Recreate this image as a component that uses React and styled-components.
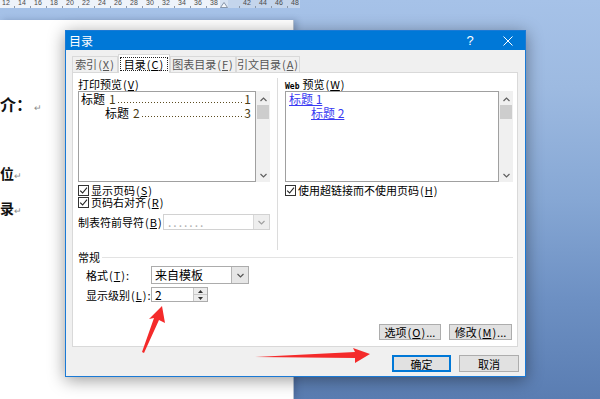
import React from 'react';
import styled, { createGlobalStyle } from 'styled-components';

const cjk = `"Noto Sans CJK SC", "Microsoft YaHei", sans-serif`;

const GlobalStyle = createGlobalStyle`
  html, body { margin: 0; padding: 0; }
  body { font-family: ${cjk}; }
  #root { width: 600px; height: 399px; }
`;

const Screen = styled.div`
  position: relative;
  width: 600px;
  height: 399px;
  overflow: hidden;
  display: flex;
  flex-direction: column;
  background: linear-gradient(180deg, #a6c2e8 0%, #9dbae1 22%, #86a7d4 50%, #6d90c3 75%, #5a7db2 100%);
  font-family: ${cjk};
`;

const Ruler = styled.div`
  display: flex;
  width: 300px;
  height: 8px;
  flex-shrink: 0;
`;

const RulerScale = styled.div`
  display: flex;
  width: ${p => p.$w}px;
  flex-shrink: 0;
  padding-left: ${p => p.$pad}px;
  box-sizing: border-box;
  background: ${p => p.$bg};
  overflow: hidden;
  & > span:first-child { margin-left: ${p => p.$first}px; }
`;

const RulerNum = styled.span`
  position: relative;
  flex: 0 0 16px;
  text-align: center;
  font: 7px/6px "Liberation Sans", sans-serif;
  color: #4a4a4a;
  &::after {
    content: "";
    position: absolute;
    left: 0;
    bottom: 0;
    width: 1px;
    height: 2px;
    background: #8a97a8;
  }
`;

const Marker = styled.svg`
  flex-shrink: 0;
  display: block;
`;

const Workspace = styled.div`
  flex: 1;
  display: flex;
  padding-top: 12px;
`;

const Page = styled.div`
  width: 293px;
  background: #fff;
  border-right: 1px solid #b5c2d3;
  box-shadow: 3px 0 6px rgba(30, 50, 90, 0.25);
  display: flex;
  flex-direction: column;
  padding-top: 74px;
  overflow: hidden;
`;

const DocLine = styled.div`
  margin-top: ${p => p.$top || 0}px;
  font-size: ${p => p.$size}px;
  font-weight: 700;
  line-height: 20px;
  height: 20px;
  color: #111;
  white-space: nowrap;
`;

const ReturnMark = styled.span`
  margin-left: ${p => p.$gap || 0}px;
  font-size: 9px;
  font-weight: 400;
  color: #8a8a8a;
`;

const Dialog = styled.div`
  position: absolute;
  left: 65px;
  top: 30px;
  width: 461px;
  height: 347px;
  box-sizing: border-box;
  border: 1px solid #1b7ad5;
  background: #f0f0f0;
  display: flex;
  flex-direction: column;
  box-shadow: 0 3px 16px rgba(0, 0, 0, 0.4);
  font-size: 11px;
  color: #000;
`;

const TitleBar = styled.div`
  height: 19px;
  flex-shrink: 0;
  display: flex;
  align-items: center;
  padding-left: 3px;
  background: #0078d7;
  color: #fff;
  font-size: 12px;
  line-height: 19px;
`;

const TitleButton = styled.div`
  width: ${p => p.$w}px;
  height: 19px;
  display: flex;
  align-items: center;
  justify-content: center;
  margin-left: ${p => (p.$push ? 'auto' : '0')};
  font: 13px "Liberation Sans", sans-serif;
  color: #fff;
`;

const Body = styled.div`
  flex: 1;
  display: flex;
  flex-direction: column;
  padding: 4px 6px 4px 6px;
`;

const TabRow = styled.div`
  display: flex;
  align-items: flex-end;
  height: 18px;
  flex-shrink: 0;
`;

const Tab = styled.div`
  position: relative;
  z-index: ${p => (p.$active ? 1 : 0)};
  box-sizing: border-box;
  width: ${p => p.$w}px;
  height: ${p => (p.$active ? 19 : 16)}px;
  margin-bottom: ${p => (p.$active ? -1 : 0)}px;
  border: 1px solid #d9d9d9;
  border-bottom: none;
  background: ${p => (p.$active ? '#fff' : '#f0f0f0')};
  color: ${p => (p.$active ? '#000' : '#555')};
  display: flex;
  align-items: center;
  justify-content: center;
  line-height: 13px;
  white-space: nowrap;
`;

const FocusText = styled.span`
  border: 1px dotted #222;
  padding: 0 3px;
  line-height: 12px;
`;

const Mn = styled.u`
  text-underline-offset: 1px;
`;

const Paren = styled.span`
  margin: 0 1px;
`;

const Panel = styled.div`
  box-sizing: border-box;
  width: 446px;
  height: 275px;
  flex-shrink: 0;
  border: 1px solid #d9d9d9;
  background: #fff;
  padding: 4px 4px 6px 5px;
  display: flex;
  flex-direction: column;
`;

const TopSection = styled.div`
  display: flex;
  height: 173px;
  flex-shrink: 0;
`;

const Column = styled.div`
  display: flex;
  flex-direction: column;
  width: ${p => (p.$w ? `${p.$w}px` : 'auto')};
  flex: ${p => (p.$w ? '0 0 auto' : '1')};
`;

const VSeparator = styled.div`
  width: 1px;
  margin: 1px 7px 0 7px;
  background: #dcdcdc;
`;

const Label = styled.div`
  height: 14px;
  line-height: 14px;
  white-space: nowrap;
`;

const WebTag = styled.span`
  font: bold 8px "DejaVu Sans Mono", monospace;
  margin-right: 3px;
`;

const ListRow = styled.div`
  display: flex;
  height: 91px;
`;

const ListBox = styled.div`
  flex: 1;
  box-sizing: border-box;
  border: 1px solid #a0a0a0;
  background: #fff;
  padding: 0 4px 0 1px;
  font-size: 12px;
`;

const Scrollbar = styled.div`
  width: 14px;
  background: #f0f0f0;
  display: flex;
  flex-direction: column;
  align-items: center;
  padding-top: 2px;
  box-sizing: border-box;
`;

const ScrollArrow = styled.div`
  height: ${p => p.$h}px;
  display: flex;
  align-items: center;
  justify-content: center;
`;

const Thumb = styled.div`
  width: 12px;
  height: 14px;
  background: #cdcdcd;
`;

const Grow = styled.div`
  flex: 1;
`;

const PreviewLine = styled.div`
  display: flex;
  align-items: center;
  height: 14px;
  line-height: 14px;
  padding-left: ${p => p.$indent}px;
  white-space: nowrap;
`;

const PageNum = styled.span`
  margin-left: ${p => p.$gap || 0}px;
  color: #4a3c14;
`;

const Leader = styled.span`
  flex: 1;
  align-self: flex-end;
  height: 1px;
  margin: 0 2px 3px 2px;
  background-image: linear-gradient(to right, #5c4c20 1px, transparent 1px);
  background-size: 3px 1px;
`;

const Link = styled.span`
  color: #3a3af2;
  text-decoration: underline;
  text-underline-offset: 1px;
`;

const CheckRow = styled.div`
  display: flex;
  align-items: center;
  gap: 2px;
  height: 12px;
  line-height: 12px;
  margin-top: ${p => p.$top || 0}px;
  white-space: nowrap;
`;

const CheckBox = styled.span`
  width: 11px;
  height: 11px;
  box-sizing: border-box;
  border: 1px solid #333;
  background: #fff;
  display: flex;
  align-items: center;
  justify-content: center;
  flex-shrink: 0;
`;

const FieldRow = styled.div`
  display: flex;
  align-items: center;
  height: ${p => p.$h}px;
  margin-top: ${p => p.$top || 0}px;
  padding-left: ${p => p.$indent || 0}px;
  white-space: nowrap;
`;

const FieldLabel = styled.span`
  width: ${p => p.$w}px;
  flex-shrink: 0;
`;

const Combo = styled.div`
  box-sizing: border-box;
  width: ${p => p.$w}px;
  height: 100%;
  border: 1px solid ${p => (p.$disabled ? '#d2d2d2' : '#acacac')};
  background: #fff;
  display: flex;
  align-items: center;
`;

const ComboText = styled.span`
  flex: 1;
  padding-left: ${p => p.$pad || 3}px;
  color: ${p => (p.$disabled ? '#b0b0b0' : '#000')};
  letter-spacing: ${p => (p.$disabled ? '2px' : '0')};
  font-size: 12px;
  line-height: 12px;
`;

const ComboArrow = styled.span`
  width: ${p => p.$w}px;
  align-self: stretch;
  box-sizing: border-box;
  border-left: 1px solid ${p => (p.$disabled ? '#d8d8d8' : '#b4b4b4')};
  background: ${p => (p.$disabled ? '#eeeeee' : '#e6e6e6')};
  display: flex;
  align-items: center;
  justify-content: center;
`;

const SpinButtons = styled.span`
  width: 13px;
  align-self: stretch;
  display: flex;
  flex-direction: column;
  border-left: 1px solid #c8c8c8;
  background: #ececec;
`;

const SpinHalf = styled.span`
  flex: 1;
  display: flex;
  align-items: center;
  justify-content: center;
  border-top: ${p => (p.$lower ? '1px solid #c8c8c8' : 'none')};
`;

const GroupHeader = styled.div`
  display: flex;
  align-items: center;
  height: 14px;
  line-height: 14px;
  & > span:first-child { width: 24px; }
`;

const GroupLine = styled.span`
  flex: 1;
  height: 1px;
  background: #e3e3e3;
`;

const ButtonRow = styled.div`
  display: flex;
  justify-content: flex-end;
  gap: 8px;
  margin-top: ${p => p.$top || 0}px;
  margin-right: ${p => p.$right || 0}px;
`;

const Button = styled.div`
  box-sizing: border-box;
  width: ${p => p.$w}px;
  height: ${p => p.$h}px;
  border: 1px solid ${p => (p.$primary ? '#0078d7' : '#adadad')};
  box-shadow: ${p => (p.$primary ? 'inset 0 0 0 1px #0078d7' : 'none')};
  background: #e1e1e1;
  display: flex;
  align-items: center;
  justify-content: center;
  line-height: 12px;
  white-space: nowrap;
`;

const Annotations = styled.svg`
  position: absolute;
  left: 0;
  top: 0;
  pointer-events: none;
`;

function Chevron({ up, color = '#606060' }) {
  return (
    <svg width="7" height="5" viewBox="0 0 7 5">
      <path d={up ? 'M0.5 4 L3.5 1 L6.5 4' : 'M0.5 1 L3.5 4 L6.5 1'} fill="none" stroke={color} strokeWidth="1.2" />
    </svg>
  );
}

function Tri({ up }) {
  return (
    <svg width="5" height="3" viewBox="0 0 5 3">
      <path d={up ? 'M0 3 L2.5 0 L5 3 Z' : 'M0 0 L2.5 3 L5 0 Z'} fill="#333" />
    </svg>
  );
}

// access key in brackets, e.g. (V)
function Key({ k }) {
  return (
    <>
      <Paren>(</Paren><Mn>{k}</Mn><Paren>)</Paren>
    </>
  );
}

function Check({ children, top }) {
  return (
    <CheckRow $top={top}>
      <CheckBox>
        <svg width="9" height="9" viewBox="0 0 9 9">
          <path d="M1.2 4.6 L3.6 7 L8 1.6" fill="none" stroke="#222" strokeWidth="1.1" />
        </svg>
      </CheckBox>
      <span>{children}</span>
    </CheckRow>
  );
}

function PreviewList({ children }) {
  return (
    <ListRow>
      <ListBox>{children}</ListBox>
      <Scrollbar>
        <ScrollArrow $h={12}><Chevron up /></ScrollArrow>
        <Thumb />
        <Grow />
        <ScrollArrow $h={14}><Chevron /></ScrollArrow>
      </Scrollbar>
    </ListRow>
  );
}

const rulerLeft = [12, 14, 16, 18, 20, 22, 24, 26, 28, 30, 32, 34, 36, 38];
const rulerRight = [42, 44, 46, 48];

function TopRuler() {
  return (
    <Ruler>
      <RulerScale $w={220} $pad={0} $first={-2} $bg="#eef3fa">
        {rulerLeft.map(n => <RulerNum key={n}>{n}</RulerNum>)}
      </RulerScale>
      <Marker width="8" height="8" viewBox="0 0 8 8">
        <rect width="8" height="8" fill="#d6e2f2" />
        <path d="M0.5 7.5 L4 2.5 L7.5 7.5 Z" fill="#f6f8fb" stroke="#6f7f95" strokeWidth="0.8" />
      </Marker>
      <RulerScale $w={72} $pad={11} $first={0} $bg="#c4d5ec">
        {rulerRight.map(n => <RulerNum key={n}>{n}</RulerNum>)}
      </RulerScale>
    </Ruler>
  );
}

function TocDialog() {
  return (
    <Dialog>
      <TitleBar>
        <span>目录</span>
        <TitleButton $w={40} $push>?</TitleButton>
        <TitleButton $w={35}>
          <svg width="10" height="10" viewBox="0 0 10 10">
            <path d="M0.5 0.5 L9.5 9.5 M9.5 0.5 L0.5 9.5" stroke="#fff" strokeWidth="1" />
          </svg>
        </TitleButton>
      </TitleBar>
      <Body>
        <TabRow>
          <Tab $w={46}>索引<Key k="X" /></Tab>
          <Tab $w={52} $active><FocusText>目录<Key k="C" /></FocusText></Tab>
          <Tab $w={66}>图表目录<Key k="F" /></Tab>
          <Tab $w={64}>引文目录<Key k="A" /></Tab>
        </TabRow>
        <Panel>
          <TopSection>
            <Column $w={192}>
              <Label>打印预览<Key k="V" /></Label>
              <PreviewList>
                <PreviewLine $indent={1}>
                  标题<PageNum $gap={4}>1</PageNum><Leader /><PageNum>1</PageNum>
                </PreviewLine>
                <PreviewLine $indent={25}>
                  标题<PageNum $gap={4}>2</PageNum><Leader /><PageNum>3</PageNum>
                </PreviewLine>
              </PreviewList>
              <Check top={2}>显示页码<Key k="S" /></Check>
              <Check>页码右对齐<Key k="R" /></Check>
              <FieldRow $h={16} $top={6}>
                <FieldLabel $w={85}>制表符前导符<Key k="B" />:</FieldLabel>
                <Combo $w={107} $disabled>
                  <ComboText $disabled $pad={4}>.......</ComboText>
                  <ComboArrow $w={16} $disabled><Chevron color="#a0a0a0" /></ComboArrow>
                </Combo>
              </FieldRow>
            </Column>
            <VSeparator />
            <Column>
              <Label><WebTag>Web</WebTag>预览<Key k="W" /></Label>
              <PreviewList>
                <PreviewLine $indent={2}><Link>标题 1</Link></PreviewLine>
                <PreviewLine $indent={24}><Link>标题 2</Link></PreviewLine>
              </PreviewList>
              <Check top={2}>使用超链接而不使用页码<Key k="H" /></Check>
            </Column>
          </TopSection>
          <GroupHeader>
            <span>常规</span>
            <GroupLine />
          </GroupHeader>
          <FieldRow $h={18} $top={2} $indent={8}>
            <FieldLabel $w={65}>格式<Key k="T" />:</FieldLabel>
            <Combo $w={98}>
              <ComboText>来自模板</ComboText>
              <ComboArrow $w={17}><Chevron color="#555" /></ComboArrow>
            </Combo>
          </FieldRow>
          <FieldRow $h={15} $top={3} $indent={8}>
            <FieldLabel $w={65}>显示级别<Key k="L" />:</FieldLabel>
            <Combo $w={57}>
              <ComboText>2</ComboText>
              <SpinButtons>
                <SpinHalf><Tri up /></SpinHalf>
                <SpinHalf $lower><Tri /></SpinHalf>
              </SpinButtons>
            </Combo>
          </FieldRow>
          <Grow />
          <ButtonRow $right={1}>
            <Button $w={62} $h={16}>选项<Key k="O" />...</Button>
            <Button $w={63} $h={16}>修改<Key k="M" />...</Button>
          </ButtonRow>
        </Panel>
        <ButtonRow $top={8}>
          <Button $w={59} $h={17} $primary>确定</Button>
          <Button $w={60} $h={17}>取消</Button>
        </ButtonRow>
      </Body>
    </Dialog>
  );
}

export default function App() {
  return (
    <>
      <GlobalStyle />
      <Screen>
        <TopRuler />
        <Workspace>
          <Page>
            <DocLine $size={16}>介：<ReturnMark $gap={2}>↵</ReturnMark></DocLine>
            <DocLine $size={14} $top={49}>位<ReturnMark>↵</ReturnMark></DocLine>
            <DocLine $size={14} $top={15}>录<ReturnMark>↵</ReturnMark></DocLine>
          </Page>
        </Workspace>
        <TocDialog />
        <Annotations width="600" height="399" viewBox="0 0 600 399">
          <polygon points="162,306 165,323 159,320 144,353 142,352 154,318 149,319" fill="#f42a2a" />
          <polygon points="255,357 355,352 353,348 370,354 355,363 355,358" fill="#f42a2a" />
        </Annotations>
      </Screen>
    </>
  );
}
